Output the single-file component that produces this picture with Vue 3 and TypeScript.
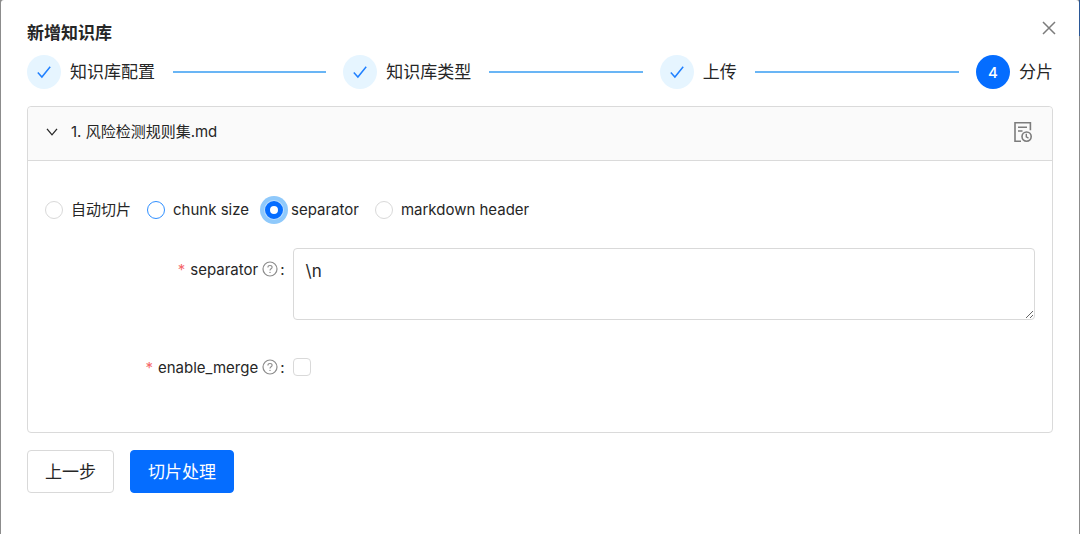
<script setup lang="ts">
import { ref } from 'vue'

interface Step {
  title: string
  done: boolean
}

const steps: Step[] = [
  { title: '知识库配置', done: true },
  { title: '知识库类型', done: true },
  { title: '上传', done: true },
  { title: '分片', done: false },
]

const strategies = [
  { value: 'auto', label: '自动切片' },
  { value: 'chunk', label: 'chunk size' },
  { value: 'separator', label: 'separator' },
  { value: 'markdown', label: 'markdown header' },
]

const strategy = ref('separator')
const hovered = ref('chunk')
const separator = ref('\\n')
const enableMerge = ref(false)
const expanded = ref(true)
</script>

<template>
  <div class="backdrop">
    <main class="dialog" role="dialog" aria-labelledby="dialog-title">
      <header class="dialog-head">
        <h1 id="dialog-title">新增知识库</h1>
        <button class="icon-button close" type="button" aria-label="关闭">
          <svg width="16" height="16" viewBox="0 0 16 16">
            <path d="M2 2l12 12M14 2L2 14" fill="none" stroke="currentColor" stroke-width="1.5" />
          </svg>
        </button>
      </header>

      <ol class="steps">
        <li v-for="(step, i) in steps" :key="step.title" class="step">
          <span class="step-icon" :class="{ active: !step.done }">
            <svg v-if="step.done" width="16" height="16" viewBox="0 0 16 16">
              <path d="M1.8 8.4l4.1 4.6L14.2 2.8" fill="none" stroke="currentColor" stroke-width="1.5" />
            </svg>
            <template v-else>{{ i + 1 }}</template>
          </span>
          <span class="step-title">{{ step.title }}</span>
          <span v-if="step.done" class="step-line"></span>
        </li>
      </ol>

      <section class="panel">
        <div class="panel-head">
          <button class="toggle" type="button" :aria-expanded="expanded" @click="expanded = !expanded">
            <svg width="12" height="12" viewBox="0 0 12 12">
              <path d="M1 2.8l5 6 5-6" fill="none" stroke="currentColor" stroke-width="1.3" />
            </svg>
            <span>1. 风险检测规则集.md</span>
          </button>
          <button class="icon-button" type="button" aria-label="处理记录">
            <svg width="20" height="22" viewBox="0 0 20 22" fill="none" stroke="currentColor" stroke-width="1.6">
              <path d="M8 20.2H2V1.8h15.4v7.4" />
              <path d="M5 6.2h9M5 10h4.5" />
              <circle cx="13.6" cy="15.6" r="4.6" />
              <path d="M13.3 12.8v3.1l2.2 1.2" stroke-width="1.4" />
            </svg>
          </button>
        </div>

        <form v-if="expanded" class="panel-body" @submit.prevent>
          <div class="radios" role="radiogroup" aria-label="切片方式">
            <label v-for="item in strategies" :key="item.value" class="radio" @mouseenter="hovered = item.value">
              <input v-model="strategy" type="radio" name="strategy" :value="item.value"
                :class="{ hovered: hovered === item.value }" />
              <span>{{ item.label }}</span>
            </label>
          </div>

          <div class="field">
            <label class="field-label" for="separator">
              <span class="required">*</span>
              <span>separator</span>
              <svg class="help" width="16" height="16" viewBox="0 0 16 16" fill="none" stroke="currentColor">
                <circle cx="8" cy="8" r="7" stroke-width="1.2" />
                <path d="M5.9 6.4c0-1.2.9-1.9 2.1-1.9s2.1.7 2.1 1.8c0 1.5-2.1 1.5-2.1 3.1" stroke-width="1.1" />
                <circle cx="8" cy="11.4" r=".7" fill="currentColor" stroke="none" />
              </svg>
              <span>:</span>
            </label>
            <textarea id="separator" v-model="separator"></textarea>
          </div>

          <div class="field">
            <label class="field-label" for="enable-merge">
              <span class="required">*</span>
              <span>enable_merge</span>
              <svg class="help" width="16" height="16" viewBox="0 0 16 16" fill="none" stroke="currentColor">
                <circle cx="8" cy="8" r="7" stroke-width="1.2" />
                <path d="M5.9 6.4c0-1.2.9-1.9 2.1-1.9s2.1.7 2.1 1.8c0 1.5-2.1 1.5-2.1 3.1" stroke-width="1.1" />
                <circle cx="8" cy="11.4" r=".7" fill="currentColor" stroke="none" />
              </svg>
              <span>:</span>
            </label>
            <div class="check-cell">
              <input id="enable-merge" v-model="enableMerge" type="checkbox" />
            </div>
          </div>
        </form>
      </section>

      <footer class="actions">
        <button class="button" type="button">上一步</button>
        <button class="button primary" type="button">切片处理</button>
      </footer>
    </main>
  </div>
</template>

<style>
body {
  margin: 0;
}
</style>

<style scoped>
.backdrop {
  box-sizing: border-box;
  min-height: 100vh;
  padding: 0 1px;
  background: linear-gradient(#2a5796, #2a5796) right top / 1px 36px no-repeat #8c8c8c;
  font-family: Inter, "Noto Sans CJK SC", sans-serif;
  color: #262626;
}

.dialog {
  box-sizing: border-box;
  min-height: 100vh;
  padding: 20px 26px;
  background: #fff;
  border-radius: 3px 3px 0 0;
}

.dialog-head {
  display: flex;
  justify-content: space-between;
  align-items: center;
  height: 27px;
}

h1 {
  margin: 0;
  font-size: 17px;
  line-height: 27px;
  font-weight: 600;
}

button {
  font-family: inherit;
  color: inherit;
  cursor: pointer;
}

.icon-button {
  display: flex;
  padding: 0;
  border: 0;
  background: none;
  color: #7c7c7c;
}

.close {
  align-self: flex-start;
  margin-right: -4px;
}

.steps {
  display: flex;
  margin: 8px 0 17px;
  padding: 0;
  list-style: none;
}

.step {
  display: flex;
  flex: 1;
  align-items: center;
  min-width: 0;
}

.step:last-child {
  flex: none;
}

.step-icon {
  display: flex;
  flex: none;
  align-items: center;
  justify-content: center;
  width: 34px;
  height: 34px;
  margin-right: 9px;
  border-radius: 50%;
  background: #e6f5ff;
  color: #2080ff;
  font-size: 15px;
  font-weight: 500;
}

.step-icon.active {
  background: #056dff;
  color: #fff;
}

.step-title {
  font-size: 17px;
  line-height: 34px;
  white-space: nowrap;
}

.step-line {
  flex: 1;
  height: 2px;
  margin: 0 17px 0 18px;
  background: #69b5f5;
}

.panel {
  border: 1px solid #dadada;
  border-radius: 4px;
}

.panel-head {
  display: flex;
  align-items: center;
  justify-content: space-between;
  height: 50px;
  padding: 0 19px 3px 18px;
  border-bottom: 1px solid #dadada;
  border-radius: 4px 4px 0 0;
  background: #fafafa;
}

.toggle {
  display: flex;
  align-items: center;
  gap: 13px;
  padding: 0;
  border: 0;
  background: none;
  font-size: 15px;
  line-height: 24px;
}

.panel-body {
  display: flex;
  flex-direction: column;
  gap: 26px;
  padding: 37px 17px 44px;
}

.radios {
  display: flex;
  flex-wrap: wrap;
  gap: 16px;
}

.radio {
  display: flex;
  align-items: center;
  gap: 8px;
  font-size: 15px;
  line-height: 24px;
}

input {
  box-sizing: border-box;
  flex: none;
  width: 18px;
  height: 18px;
  margin: 0;
  appearance: none;
  border: 1px solid #d9d9d9;
  background: #fff;
}

input[type="radio"] {
  border-radius: 50%;
}

input[type="radio"].hovered {
  border-color: #2f8fff;
}

input[type="radio"]:checked {
  border: 5px solid #056dff;
  box-shadow: 0 0 0 1px #b9dcff, 0 0 0 5px #8fc9fb;
}

input[type="checkbox"] {
  border-radius: 4px;
}

input[type="checkbox"]:checked {
  border-color: #056dff;
  background: #056dff;
}

.field {
  display: grid;
  grid-template-columns: 1fr 3fr;
}

.field-label {
  display: flex;
  align-items: center;
  justify-content: flex-end;
  height: 42px;
  padding-right: 8px;
  font-size: 15px;
}

.required {
  margin-right: 5px;
  color: #f5686b;
}

.help {
  margin: 0 2px 0 4px;
  color: #8c8c8c;
}

textarea {
  box-sizing: border-box;
  width: 100%;
  height: 72px;
  padding: 8px 12px;
  resize: vertical;
  border: 1px solid #d9d9d9;
  border-radius: 4px;
  outline: none;
  background: #fff;
  color: inherit;
  font-family: inherit;
  font-size: 17px;
  line-height: 28px;
}

.check-cell {
  display: flex;
  align-items: center;
  height: 42px;
}

.actions {
  display: flex;
  gap: 16px;
  margin-top: 17px;
}

.button {
  height: 43px;
  padding: 0 17px;
  border: 1px solid #d9d9d9;
  border-radius: 4px;
  background: #fff;
  font-size: 17px;
  line-height: 26px;
}

.button.primary {
  border-color: #056dff;
  background: #056dff;
  color: #fff;
}
</style>
